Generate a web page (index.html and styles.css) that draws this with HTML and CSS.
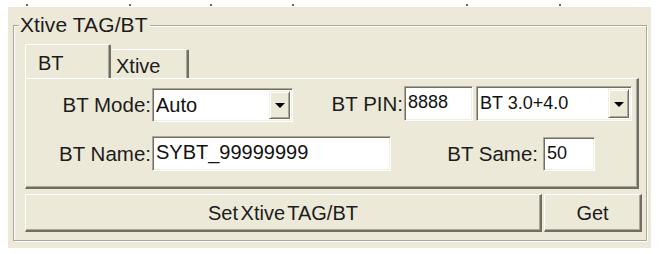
FILE: index.html
```html
<!DOCTYPE html>
<html>
<head>
<meta charset="utf-8">
<link rel="stylesheet" href="styles.css">
</head>
<body>
<div class="ticks">
  <span class="tick t1"></span><span class="tick t2"></span><span class="tick t3"></span><span class="tick t4"></span><span class="tick t5"></span><span class="tick t6"></span>
</div>
<div class="panel">
  <div class="group">
    <span class="legend">Xtive TAG/BT</span>
    <div class="tabs">
      <div class="tab active">BT</div>
      <div class="tab inactive">Xtive</div>
    </div>
    <div class="pane">
      <div class="row">
        <label class="lbl lbl-mode">BT Mode:</label>
        <div class="combo combo-mode"><span class="val">Auto</span><span class="drop"><span class="tri"></span></span></div>
        <label class="lbl lbl-pin">BT PIN:</label>
        <div class="field field-pin small">8888</div>
        <div class="combo combo-ver"><span class="val small">BT 3.0+4.0</span><span class="drop"><span class="tri"></span></span></div>
      </div>
      <div class="row">
        <label class="lbl lbl-name">BT Name:</label>
        <div class="field field-name">SYBT_99999999</div>
        <label class="lbl lbl-same">BT Same:</label>
        <div class="field field-same small">50</div>
      </div>
    </div>
    <div class="buttons">
      <button class="btn btn-set">Set Xtive TAG/BT</button>
      <button class="btn btn-get">Get</button>
    </div>
  </div>
</div>
</body>
</html>
```
FILE: styles.css
```css
* { box-sizing: border-box; }
html, body { margin: 0; padding: 0; background: #ffffff; }
body {
  font-family: "Liberation Sans", Arial, sans-serif;
  font-size: 20px;
  color: #1c1c1c;
  width: 660px;
  height: 254px;
  overflow: hidden;
}
.ticks {
  height: 7px;
  display: flex;
  align-items: flex-end;
  padding-bottom: 1px;
}
.tick { width: 2px; height: 2px; background: #6a6a6a; }
.t1 { margin-left: 26px; }
.t2 { margin-left: 101px; }
.t3 { margin-left: 79px; }
.t4 { margin-left: 80px; }
.t5 { margin-left: 172px; }
.t6 { margin-left: 91px; }

.panel {
  margin-left: 8px;
  width: 643px;
  height: 241px;
  background: #ece9d8;
  padding: 18px 0 0 5px;
}
.group {
  position: relative;
  width: 634px;
  height: 216px;
  border: 1px solid #aca899;
  box-shadow: inset 1px 1px 0 #ffffff, 1px 1px 0 #ffffff;
  padding: 18px 0 0 11px;
}
.legend {
  position: absolute;
  left: 5px;
  top: -13px;
  background: #ece9d8;
  padding: 0 2px 0 1px;
  line-height: 24px;
  font-size: 21px;
  letter-spacing: 0.1px;
}
.tabs {
  display: flex;
  align-items: flex-end;
  height: 34px;
}
.tab {
  background: #ece9d8;
  border-top: 1px solid #ffffff;
  border-left: 1px solid #ffffff;
  border-right: 2px solid #716f64;
  border-radius: 2px 2px 0 0;
  box-shadow: inset -1px 0 0 #aca899;
}
.tab.active {
  width: 86px;
  height: 34px;
  padding: 6px 0 0 12px;
  line-height: 24px;
}
.tab.inactive {
  width: 78px;
  height: 29px;
  padding: 4px 0 0 5px;
  line-height: 24px;
  border-left: none;
}
.pane {
  width: 614px;
  height: 111px;
  border-top: 1px solid #ffffff;
  border-left: 1px solid #ffffff;
  border-right: 2px solid #716f64;
  border-bottom: 2px solid #716f64;
  box-shadow: inset -1px -1px 0 #aca899;
  padding-top: 7px;
}
.row {
  display: flex;
  align-items: flex-start;
  height: 35px;
}
.row + .row { margin-top: 15px; }
.lbl {
  display: block;
  text-align: right;
  line-height: 35px;
  white-space: nowrap;
  font-size: 20.5px;
}
.lbl-mode { width: 126px; padding-right: 1px; margin-top: 1px; }
.lbl-pin { width: 111px; padding-right: 1px; }
.lbl-name { width: 126px; padding-right: 1px; }
.lbl-same { width: 152px; padding-right: 5px; }

.field, .combo {
  background: #ffffff;
  border-top: 1px solid #aca899;
  border-left: 1px solid #aca899;
  border-right: 1px solid #ffffff;
  border-bottom: 1px solid #ffffff;
  box-shadow: inset 1px 1px 0 #716f64, inset -1px -1px 0 #f1efe2;
  height: 35px;
  line-height: 31px;
  padding-left: 3px;
  white-space: nowrap;
  color: #111;
}
.small { font-size: 18px; }
.field-pin { width: 69px; }
.field-name { width: 239px; }
.field-same { width: 52px; height: 34px; margin-top: 1px; }

.combo {
  display: flex;
  justify-content: space-between;
  padding: 2px 2px 2px 3px;
  line-height: 29px;
}
.combo-mode { width: 141px; height: 34px; margin-top: 2px; }
.combo-ver { width: 156px; margin-left: 3px; }
.combo .val { display: block; }
.drop {
  width: 21px;
  height: 100%;
  background: #ece9d8;
  border-top: 1px solid #f1efe2;
  border-left: 1px solid #f1efe2;
  border-right: 1px solid #716f64;
  border-bottom: 1px solid #716f64;
  box-shadow: inset 1px 1px 0 #ffffff, inset -1px -1px 0 #aca899;
  display: flex;
  align-items: center;
  justify-content: center;
}
.tri {
  width: 0;
  height: 0;
  border-left: 5px solid transparent;
  border-right: 5px solid transparent;
  border-top: 5px solid #000;
  margin-top: 1px;
}

.buttons {
  display: flex;
  margin-top: 5px;
  gap: 2px;
}
.btn {
  font-family: "Liberation Sans", Arial, sans-serif;
  font-size: 20px;
  color: #1c1c1c;
  height: 38px;
  background: #ece9d8;
  border-top: 1px solid #ffffff;
  border-left: 1px solid #ffffff;
  border-right: 2px solid #716f64;
  border-bottom: 2px solid #716f64;
  box-shadow: inset -1px -1px 0 #aca899;
  padding: 0;
  margin: 0;
  line-height: 34px;
}
.btn-set { width: 517px; word-spacing: -3px; }
.btn-get { width: 98px; }
```
